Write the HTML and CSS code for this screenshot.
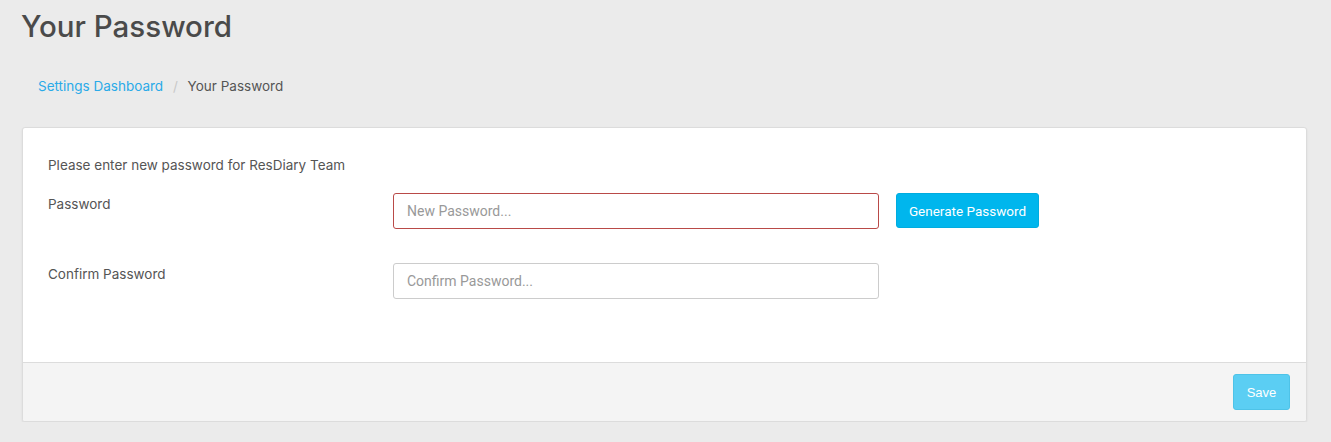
FILE: index.html
```html
<!DOCTYPE html>
<html>
<head>
<meta charset="utf-8">
<link rel="stylesheet" href="styles.css">
</head>
<body>
<div class="page">
  <h1 class="title">Your Password</h1>
  <nav class="crumbs">
    <a class="crumb-link" href="#">Settings Dashboard</a>
    <span class="crumb-sep">/</span>
    <span class="crumb-current">Your Password</span>
  </nav>
  <div class="panel">
    <div class="panel-body">
      <p class="intro">Please enter new password for ResDiary Team</p>
      <div class="row">
        <label class="label">Password</label>
        <input class="field field-error" type="password" placeholder="New Password...">
        <button class="btn-generate" type="button">Generate Password</button>
      </div>
      <div class="row row-second">
        <label class="label">Confirm Password</label>
        <input class="field" type="password" placeholder="Confirm Password...">
      </div>
    </div>
    <div class="panel-footer">
      <button class="btn-save" type="button">Save</button>
    </div>
  </div>
</div>
</body>
</html>
```
FILE: styles.css
```css
html, body {
  margin: 0;
  padding: 0;
  background: #ebebeb;
}
body {
  font-family: "Inter", "Liberation Sans", sans-serif;
  color: #555;
}
.page {
  padding: 0 24px 0 22px;
}
.title {
  margin: 0;
  padding-top: 6px;
  height: 44px;
  font-size: 29.5px;
  font-weight: 500;
  color: #4a4a4a;
  line-height: 40px;
  margin-left: -1px;
}
.crumbs {
  margin-top: 26px;
  padding: 0 16px;
  font-size: 13.5px;
  line-height: 20px;
  height: 20px;
}
.crumb-link {
  color: #2aaae8;
  text-decoration: none;
}
.crumb-sep {
  color: #c8c8c8;
  padding: 0 6px;
}
.crumb-current {
  color: #555;
}
.panel {
  margin-top: 31px;
  background: #fff;
  border: 1px solid #dcdcdc;
  border-radius: 3px;
  box-shadow: 0 1px 2px rgba(0,0,0,0.08);
  overflow: hidden;
}
.panel-body {
  padding: 27px 26px 63px 25px;
}
.intro {
  margin: 0;
  font-size: 13.5px;
  line-height: 20px;
}
.row {
  display: flex;
  align-items: flex-start;
  margin-top: 18px;
}
.row-second {
  margin-top: 34px;
}
.label {
  width: 345px;
  font-size: 13.5px;
  line-height: 20px;
  padding-top: 1px;
}
.field {
  box-sizing: border-box;
  width: 486px;
  height: 36px;
  border: 1px solid #ccc;
  border-radius: 3px;
  padding: 0 13px;
  font-family: "Roboto", "Liberation Sans", sans-serif;
  font-size: 14px;
  color: #555;
  background: #fff;
}
.field::placeholder {
  color: #999;
}
.field-error {
  border-color: #b94a48;
}
.btn-generate {
  margin-left: 17px;
  box-sizing: border-box;
  width: 143px;
  height: 35px;
  border: 1px solid #00acdf;
  border-radius: 3px;
  background: #00b6ed;
  color: #fff;
  font-family: "Roboto", "Liberation Sans", sans-serif;
  font-size: 13.5px;
  padding: 0;
}
.panel-footer {
  background: #f4f4f4;
  border-top: 1px solid #dcdcdc;
  height: 59px;
  display: flex;
  justify-content: flex-end;
  align-items: flex-start;
  padding: 11px 16px 0 0;
  box-sizing: border-box;
}
.btn-save {
  box-sizing: border-box;
  width: 57px;
  height: 36px;
  border: 1px solid #4ec3e8;
  border-radius: 3px;
  background: #5bcef3;
  color: #fff;
  font-family: "Liberation Sans", Arial, sans-serif;
  font-size: 13px;
  padding: 0;
}
```
